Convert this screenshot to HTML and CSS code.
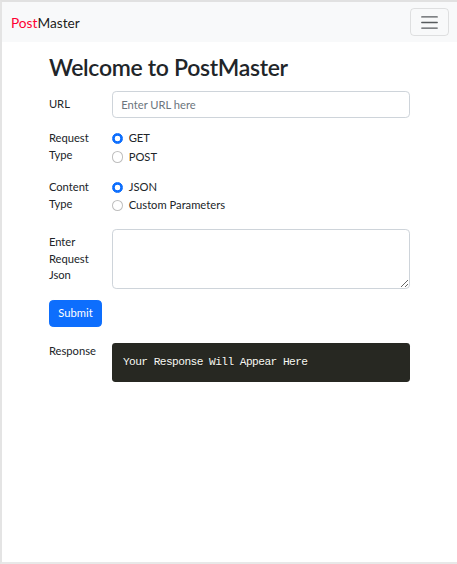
FILE: index.html
```html
<!DOCTYPE html>
<html lang="en">
<head>
<meta charset="utf-8">
<title>PostMaster</title>
<link rel="stylesheet" href="styles.css">
</head>
<body>
<div class="frame">
  <nav class="navbar">
    <a class="brand" href="#"><span class="brand-post">Post</span>Master</a>
    <button class="toggler" type="button" aria-label="Toggle navigation">
      <svg class="toggler-icon" viewBox="0 0 30 30" width="21" height="21" aria-hidden="true">
        <path d="M4 7h22M4 15h22M4 23h22" stroke="rgba(33,37,41,0.75)" stroke-width="2" stroke-linecap="round" fill="none"/>
      </svg>
    </button>
  </nav>

  <main class="container">
    <h1 class="title">Welcome to PostMaster</h1>

    <div class="row row-url">
      <label class="col-label" for="url">URL</label>
      <div class="col-field">
        <input class="form-control" id="url" type="text" placeholder="Enter URL here">
      </div>
    </div>

    <div class="row row-request">
      <div class="col-label">Request Type</div>
      <div class="col-field">
        <div class="check">
          <input class="radio" type="radio" name="reqType" id="get" checked>
          <label for="get">GET</label>
        </div>
        <div class="check">
          <input class="radio" type="radio" name="reqType" id="post">
          <label for="post">POST</label>
        </div>
      </div>
    </div>

    <div class="row row-content">
      <div class="col-label">Content Type</div>
      <div class="col-field">
        <div class="check">
          <input class="radio" type="radio" name="contentType" id="json" checked>
          <label for="json">JSON</label>
        </div>
        <div class="check">
          <input class="radio" type="radio" name="contentType" id="custom">
          <label for="custom">Custom Parameters</label>
        </div>
      </div>
    </div>

    <div class="row row-json">
      <label class="col-label col-label-pad" for="requestJson">Enter Request Json</label>
      <div class="col-field">
        <textarea class="form-control textarea" id="requestJson"></textarea>
      </div>
    </div>

    <button class="btn-submit" type="button">Submit</button>

    <div class="row row-response">
      <div class="col-label">Response</div>
      <div class="col-field">
        <pre class="response">Your Response Will Appear Here</pre>
      </div>
    </div>
  </main>
</div>
</body>
</html>
```

FILE: styles.css
```css
* {
  box-sizing: border-box;
}

html, body {
  margin: 0;
  padding: 0;
  background: #fff;
}

body {
  font-family: Lato, "Noto Sans", sans-serif;
  font-size: 11.2px;
  line-height: 1.5;
  color: #212529;
}

.frame {
  height: 564px;
  border-top: 2px solid #e1e1e1;
  border-left: 2px solid #e4e4e4;
  border-bottom: 2px solid #e8e8e8;
  overflow: hidden;
}

/* Navbar */
.navbar {
  height: 40px;
  background: #f8f9fa;
  display: flex;
  align-items: center;
  justify-content: space-between;
  padding: 0 8px 0 9px;
}

.brand {
  font-size: 13.7px;
  line-height: 21px;
  color: rgba(0, 0, 0, 0.9);
  text-decoration: none;
}

.brand-post {
  color: #ff0033;
}

.toggler {
  width: 39px;
  height: 28px;
  padding: 0;
  background: transparent;
  border: 1px solid rgba(0, 0, 0, 0.1);
  border-radius: 4px;
  display: flex;
  align-items: center;
  justify-content: center;
}

.toggler-icon {
  display: block;
}

/* Main content */
.container {
  width: 378px;
  margin: 0 auto;
  padding: 0 8.4px;
}

.title {
  margin: 12px 0 0;
  font-size: 23px;
  line-height: 1.2;
  font-weight: 600;
  letter-spacing: -0.32px;
  color: #212529;
}

.row {
  display: grid;
  grid-template-columns: 46px 1fr;
  column-gap: 17px;
}

.row-url {
  margin-top: 9.6px;
  align-items: center;
}

.row-request {
  margin-top: 12.6px;
}

.row-content {
  margin-top: 12px;
}

.row-json {
  margin-top: 13.8px;
}

.row-response {
  margin-top: 16.4px;
}

.col-label {
  line-height: 16.8px;
}

.col-label-pad {
  padding-top: 4.9px;
}

.form-control {
  display: block;
  width: 100%;
  height: 26.6px;
  padding: 4.2px 8.4px;
  font-family: inherit;
  font-size: 11.2px;
  line-height: 1.5;
  color: #212529;
  background: #fff;
  border: 1px solid #ced4da;
  border-radius: 4.2px;
}

.form-control::placeholder {
  color: #6c757d;
}

.textarea {
  height: 60px;
  resize: vertical;
}

/* Radios */
.check {
  display: flex;
  align-items: center;
  min-height: 16.8px;
  margin-bottom: 1.4px;
  line-height: 16.8px;
}

.radio {
  appearance: none;
  -webkit-appearance: none;
  width: 11.2px;
  height: 11.2px;
  margin: 0 5.6px 0 0;
  border: 1px solid rgba(0, 0, 0, 0.25);
  border-radius: 50%;
  background: #fff;
  flex-shrink: 0;
}

.radio:checked {
  border-color: #0d6efd;
  background: radial-gradient(circle, #fff 0, #fff 2.6px, #0d6efd 3.1px);
}

/* Button */
.btn-submit {
  display: block;
  margin-top: 11px;
  height: 26.6px;
  padding: 0 8.4px;
  font-family: inherit;
  font-size: 11.2px;
  line-height: 1.5;
  color: #fff;
  background: #0d6efd;
  border: 1px solid #0d6efd;
  border-radius: 4.2px;
}

/* Response */
.response {
  margin: 0;
  height: 39.2px;
  padding: 11.2px 11px;
  background: #272822;
  color: #f8f8f2;
  border-radius: 3.4px;
  font-family: "Liberation Mono", monospace;
  font-size: 11.2px;
  letter-spacing: -0.56px;
  line-height: 16.8px;
  text-shadow: 0 1px rgba(0, 0, 0, 0.3);
}
```
